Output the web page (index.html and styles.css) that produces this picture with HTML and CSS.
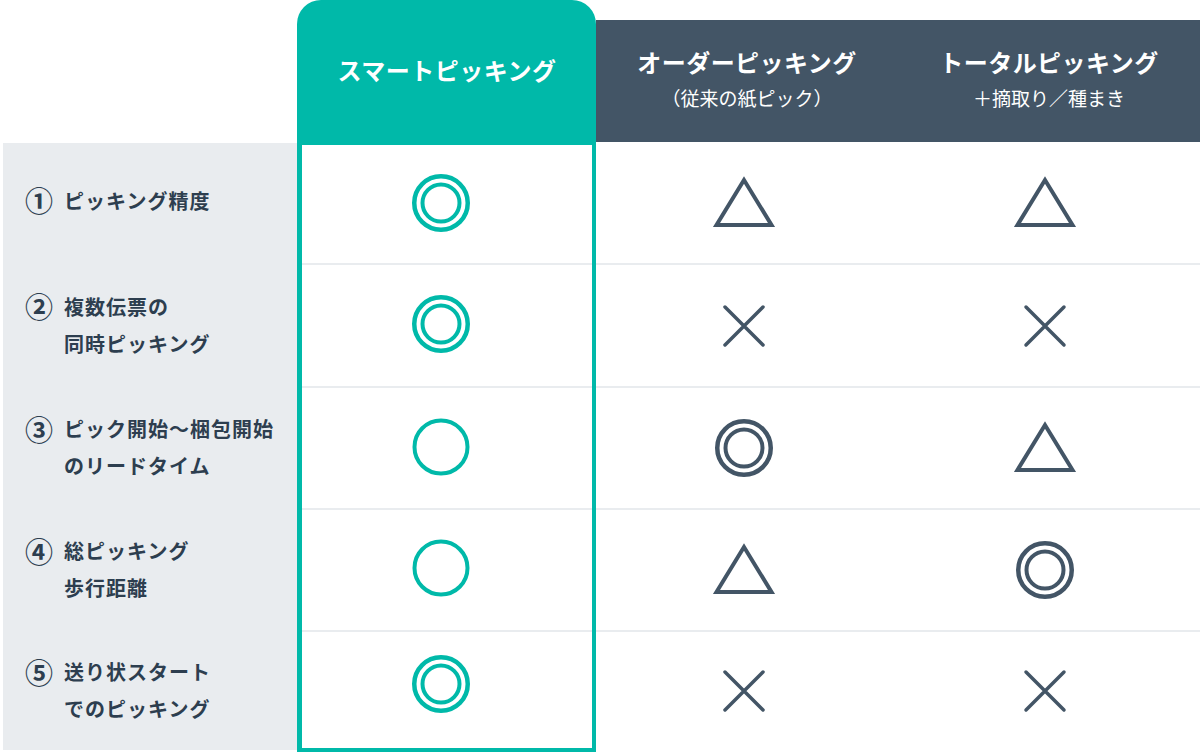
FILE: index.html
```html
<!DOCTYPE html>
<html lang="ja">
<head>
<meta charset="utf-8">
<title>ピッキング比較</title>
<link rel="stylesheet" href="styles.css">
</head>
<body>
<div class="table">
  <div class="col-labels">
    <div class="labels">
      <div class="label-row r1"><span class="num">①</span><span class="txt">ピッキング精度</span></div>
      <div class="label-row r2"><span class="num">②</span><span class="txt">複数伝票の<br>同時ピッキング</span></div>
      <div class="label-row r3"><span class="num">③</span><span class="txt">ピック開始～梱包開始<br>のリードタイム</span></div>
      <div class="label-row r4"><span class="num">④</span><span class="txt">総ピッキング<br>歩行距離</span></div>
      <div class="label-row r5"><span class="num">⑤</span><span class="txt">送り状スタート<br>でのピッキング</span></div>
    </div>
  </div>

  <div class="col-smart">
    <div class="smart-head">スマートピッキング</div>
    <div class="smart-body">
      <div class="cell s1"><svg class="sym green" viewBox="0 0 64 64"><circle cx="32" cy="32" r="26.75" stroke-width="4.5"/><circle cx="32" cy="32" r="18.5" stroke-width="4"/></svg></div>
      <div class="cell s2"><svg class="sym green" viewBox="0 0 64 64"><circle cx="32" cy="32" r="26.75" stroke-width="4.5"/><circle cx="32" cy="32" r="18.5" stroke-width="4"/></svg></div>
      <div class="cell s3"><svg class="sym green" viewBox="0 0 64 64"><circle cx="32" cy="32" r="26.5" stroke-width="4"/></svg></div>
      <div class="cell s4"><svg class="sym green" viewBox="0 0 64 64"><circle cx="32" cy="32" r="26.5" stroke-width="4"/></svg></div>
      <div class="cell s5"><svg class="sym green" viewBox="0 0 64 64"><circle cx="32" cy="32" r="26.75" stroke-width="4.5"/><circle cx="32" cy="32" r="18.5" stroke-width="4"/></svg></div>
    </div>
  </div>

  <div class="col-others">
    <div class="dark-head">
      <div class="dh"><span class="dh-title">オーダーピッキング</span><span class="dh-sub">（従来の紙ピック）</span></div>
      <div class="dh"><span class="dh-title">トータルピッキング</span><span class="dh-sub">＋摘取り／種まき</span></div>
    </div>
    <div class="other-body">
      <div class="orow r1">
        <div class="ocell c-order"><svg class="sym dark" viewBox="0 0 64 64"><polygon points="32,9 4.5,54 59.5,54" stroke-width="4"/></svg></div>
        <div class="ocell c-total"><svg class="sym dark" viewBox="0 0 64 64"><polygon points="32,9 4.5,54 59.5,54" stroke-width="4"/></svg></div>
      </div>
      <div class="orow r2">
        <div class="ocell c-order"><svg class="sym dark" viewBox="0 0 64 64"><path d="M13 13 L51 51 M51 13 L13 51" stroke-width="3.5" stroke-linecap="round"/></svg></div>
        <div class="ocell c-total"><svg class="sym dark" viewBox="0 0 64 64"><path d="M13 13 L51 51 M51 13 L13 51" stroke-width="3.5" stroke-linecap="round"/></svg></div>
      </div>
      <div class="orow r3">
        <div class="ocell c-order"><svg class="sym dark" viewBox="0 0 64 64"><circle cx="32" cy="32" r="26.75" stroke-width="4.5"/><circle cx="32" cy="32" r="18.5" stroke-width="4"/></svg></div>
        <div class="ocell c-total"><svg class="sym dark" viewBox="0 0 64 64"><polygon points="32,9 4.5,54 59.5,54" stroke-width="4"/></svg></div>
      </div>
      <div class="orow r4">
        <div class="ocell c-order"><svg class="sym dark" viewBox="0 0 64 64"><polygon points="32,9 4.5,54 59.5,54" stroke-width="4"/></svg></div>
        <div class="ocell c-total"><svg class="sym dark" viewBox="0 0 64 64"><circle cx="32" cy="32" r="26.75" stroke-width="4.5"/><circle cx="32" cy="32" r="18.5" stroke-width="4"/></svg></div>
      </div>
      <div class="orow r5">
        <div class="ocell c-order"><svg class="sym dark" viewBox="0 0 64 64"><path d="M13 13 L51 51 M51 13 L13 51" stroke-width="3.5" stroke-linecap="round"/></svg></div>
        <div class="ocell c-total"><svg class="sym dark" viewBox="0 0 64 64"><path d="M13 13 L51 51 M51 13 L13 51" stroke-width="3.5" stroke-linecap="round"/></svg></div>
      </div>
    </div>
  </div>
</div>
</body>
</html>
```

FILE: styles.css
```css
* {
  box-sizing: border-box;
  margin: 0;
  padding: 0;
}

html, body {
  width: 1200px;
  height: 754px;
  overflow: hidden;
  background: #ffffff;
}

body {
  font-family: "Noto Sans CJK JP", "Noto Sans", sans-serif;
  color: #2d3e4f;
}

.table {
  display: grid;
  grid-template-columns: 294px 299px 604px;
  padding-left: 3px;
  height: 754px;
  align-items: start;
}

/* ---------- label column ---------- */
.col-labels {
  padding-top: 143px;
}

.labels {
  background: #e9ecef;
  display: flex;
  flex-direction: column;
}

.label-row {
  display: flex;
  align-items: center;
  padding-left: 24px;
  font-size: 20px;
  font-weight: 700;
  line-height: 37px;
  letter-spacing: 0.05em;
}

.label-row.r1 { height: 120px; padding-bottom: 5px; }
.label-row.r2 { height: 123px; }
.label-row.r3 { height: 122px; }
.label-row.r4 { height: 122px; }
.label-row.r5 { height: 120px; }

.label-row .num {
  width: 39px;
  flex: none;
  font-weight: 700;
  font-size: 28px;
  line-height: 37px;
  letter-spacing: 0;
  margin-left: -2px;
}

.label-row .txt {
  display: block;
}

.label-row.r2 .num,
.label-row.r3 .num,
.label-row.r4 .num,
.label-row.r5 .num {
  transform: translateY(-18px);
}

/* ---------- smart column ---------- */
.col-smart {
  background: #00b9a9;
  border-radius: 24px 24px 0 0;
  padding: 0 4px 4px 5px;
  display: flex;
  flex-direction: column;
}

.smart-head {
  height: 145px;
  display: flex;
  align-items: center;
  justify-content: center;
  padding-bottom: 6px;
  color: #ffffff;
  font-size: 24px;
  font-weight: 700;
  letter-spacing: 0.02em;
}

.smart-body {
  background: #ffffff;
  display: flex;
  flex-direction: column;
}

.cell {
  display: flex;
  align-items: center;
  justify-content: center;
  padding-right: 12px;
  border-top: 2px solid #e9ecef;
}

.cell.s1 { height: 118px; border-top: 0; padding-bottom: 2px; }
.cell.s2 { height: 123px; padding-bottom: 4px; }
.cell.s3 { height: 122px; padding-bottom: 2px; }
.cell.s4 { height: 122px; padding-bottom: 4px; }
.cell.s5 { height: 118px; padding-bottom: 12px; }

/* ---------- other columns ---------- */
.col-others {
  padding-top: 20px;
}

.dark-head {
  height: 122px;
  background: #435566;
  display: grid;
  grid-template-columns: 302px 302px;
  margin-bottom: 1px;
}

.dh {
  display: flex;
  flex-direction: column;
  align-items: center;
  justify-content: center;
  color: #ffffff;
  padding-bottom: 2px;
}

.dh-title {
  font-size: 24px;
  font-weight: 700;
  line-height: 36px;
  letter-spacing: 0.02em;
}

.dh-sub {
  font-size: 19px;
  font-weight: 400;
  line-height: 36px;
}

.other-body {
  display: flex;
  flex-direction: column;
}

.orow {
  display: grid;
  grid-template-columns: 302px 302px;
  border-top: 2px solid #e9ecef;
}

.orow.r1 { height: 120px; border-top: 0; }
.orow.r2 { height: 123px; }
.orow.r3 { height: 122px; }
.orow.r4 { height: 122px; }
.orow.r5 { height: 120px; }

.ocell {
  display: flex;
  align-items: center;
  justify-content: center;
}

.ocell.c-order { padding-right: 6px; }
.ocell.c-total { padding-right: 8px; }

/* ---------- symbols ---------- */
.sym {
  width: 64px;
  height: 64px;
  fill: none;
  display: block;
}

.sym.green { stroke: #00b9a9; }
.sym.dark { stroke: #435566; }
```
